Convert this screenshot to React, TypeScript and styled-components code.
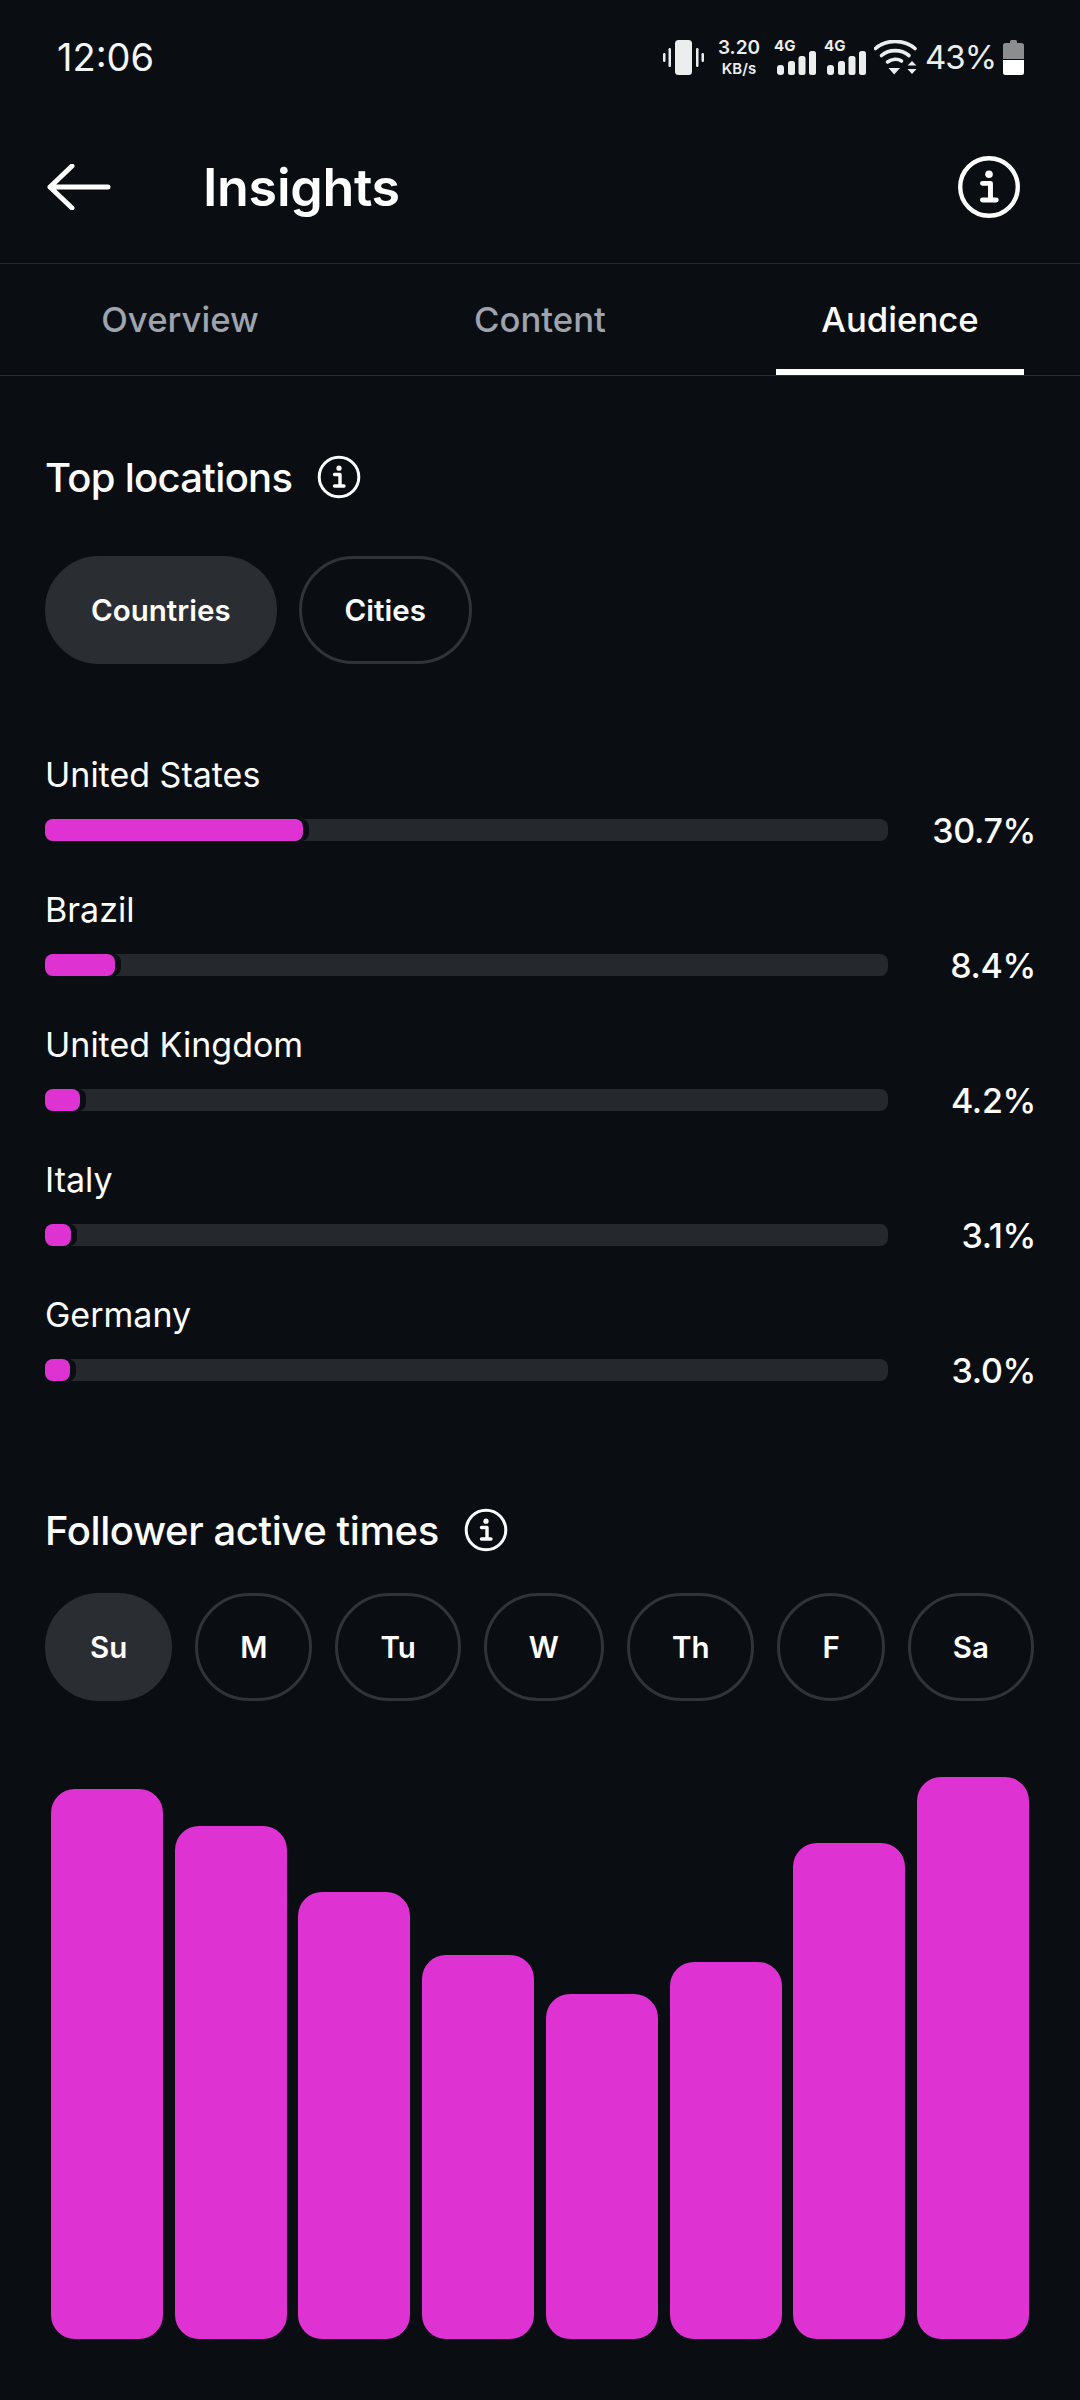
import styled, { createGlobalStyle } from "styled-components";

const GlobalStyle = createGlobalStyle`
  html, body {
    margin: 0;
    padding: 0;
    background: #0a0e12;
  }
  * {
    box-sizing: border-box;
  }
`;

const Page = styled.div`
  width: 1080px;
  height: 2400px;
  background: #0a0e12;
  color: #fff;
  font-family: Inter, "Noto Sans", sans-serif;
  overflow: hidden;
`;

const StatusBar = styled.div`
  height: 114px;
  padding: 0 56px 0 57px;
  display: flex;
  align-items: center;
  justify-content: space-between;
`;

const Time = styled.div`
  font-size: 38px;
  font-weight: 400;
  color: #f4f5f6;
`;

const StatusIcons = styled.div`
  display: flex;
  align-items: center;
`;

const Speed = styled.div`
  width: 42px;
  margin: 0 14px 0 14px;
  display: flex;
  flex-direction: column;
  align-items: center;
  gap: 3px;
  color: #eceded;
  font-weight: 600;
  white-space: nowrap;
`;

const SpeedValue = styled.span`
  font-size: 19px;
  line-height: 20px;
`;

const SpeedUnit = styled.span`
  font-size: 15px;
  line-height: 15px;
`;

const SignalGroup = styled.div`
  width: 42px;
  margin-right: 8px;
  height: 36px;
  position: relative;
`;

const SignalLabel = styled.span`
  position: absolute;
  left: 0;
  top: -2px;
  font-size: 15px;
  line-height: 18px;
  font-weight: 700;
  color: #eceded;
`;

const Battery = styled.div`
  width: 70px;
  font-size: 33px;
  color: #eceded;
  margin: 0 8px;
  letter-spacing: -1px;
  white-space: nowrap;
`;

const Header = styled.div`
  height: 150px;
  padding: 0 59px 3px 47px;
  display: flex;
  align-items: center;
  border-bottom: 1px solid #25282c;
`;

const Title = styled.h1`
  margin: 0 0 0 92px;
  flex: 1;
  font-size: 52px;
  font-weight: 600;
  letter-spacing: -0.3px;
`;

const Tabs = styled.div`
  height: 112px;
  display: grid;
  grid-template-columns: repeat(3, 1fr);
  border-bottom: 1px solid #2b2e32;
`;

const Tab = styled.div<{ $active?: boolean }>`
  position: relative;
  padding-bottom: 1px;
  display: flex;
  align-items: center;
  justify-content: center;
  font-size: 34.7px;
  font-weight: 500;
  color: ${(p) => (p.$active ? "#fff" : "#9ea3ad")};

  ${(p) =>
    p.$active &&
    `
    &::after {
      content: "";
      position: absolute;
      left: 56px;
      right: 56px;
      bottom: 0;
      height: 6px;
      background: #fff;
    }
  `}
`;

const SectionHeading = styled.div<{ $top: number }>`
  height: 60px;
  margin: ${(p) => p.$top}px 0 0 45px;
  display: flex;
  align-items: center;
  gap: 25px;
`;

const HeadingText = styled.h2<{ $tracking: number }>`
  margin: 0;
  font-size: 40px;
  font-weight: 500;
  letter-spacing: ${(p) => p.$tracking}px;
`;

const PillRow = styled.div`
  margin: 49px 0 0 45px;
  display: flex;
  gap: 22px;
`;

const Pill = styled.div<{ $active?: boolean; $pad: number }>`
  height: 108px;
  padding: 0 ${(p) => p.$pad}px;
  display: flex;
  align-items: center;
  justify-content: center;
  border-radius: 54px;
  font-size: 29.5px;
  font-weight: 600;
  border: 3px solid ${(p) => (p.$active ? "#2a2e33" : "#303337")};
  background: ${(p) => (p.$active ? "#2a2e33" : "transparent")};
`;

const LocationList = styled.div`
  margin: 88px 44px 0 45px;
  display: flex;
  flex-direction: column;
  gap: 46px;
`;

const LocationRow = styled.div`
  display: grid;
  grid-template-columns: 843px 1fr;
  row-gap: 23px;
  align-items: center;
`;

const LocationName = styled.div`
  grid-column: 1 / 3;
  height: 44px;
  line-height: 46px;
  font-size: 34px;
  font-weight: 400;
`;

const Track = styled.div`
  height: 22px;
  border-radius: 8px;
  background: #25282c;
`;

const Fill = styled.div`
  height: 22px;
  border-radius: 8px;
  background: #de33d2;
  box-shadow: 6px 0 0 #0a0e12;
`;

const Percent = styled.div`
  height: 22px;
  line-height: 24px;
  text-align: right;
  font-size: 34px;
  font-weight: 500;
  letter-spacing: -0.3px;
  white-space: nowrap;
`;

const DayRow = styled.div`
  margin: 33px 46px 0 45px;
  display: flex;
  justify-content: space-between;
`;

const Chart = styled.div`
  margin: 76px 51px 0 51px;
  height: 562px;
  display: flex;
  align-items: flex-end;
  justify-content: space-between;
`;

const Bar = styled.div`
  width: 112px;
  border-radius: 24px;
  background: #de33d2;
`;

const locations = [
  { name: "United States", value: "30.7%", fill: 258 },
  { name: "Brazil", value: "8.4%", fill: 70 },
  { name: "United Kingdom", value: "4.2%", fill: 35 },
  { name: "Italy", value: "3.1%", fill: 26 },
  { name: "Germany", value: "3.0%", fill: 25 },
];

const days = ["Su", "M", "Tu", "W", "Th", "F", "Sa"];

const barHeights = [550, 513, 447, 384, 345, 377, 496, 562];

function InfoIcon({ size }: { size: number }) {
  return (
    <svg width={size} height={size} viewBox="0 0 44 44" fill="none">
      <circle cx="22" cy="22" r="19.8" stroke="#fff" strokeWidth="3" />
      <circle cx="22" cy="13.2" r="2.6" fill="#fff" />
      <path
        d="M17.5 19.5H23V30.5M17.5 31H27"
        stroke="#fff"
        strokeWidth="3.4"
        strokeLinecap="round"
        strokeLinejoin="round"
      />
    </svg>
  );
}

function BackArrow() {
  return (
    <svg width="64" height="46" viewBox="0 0 64 46" fill="none">
      <path
        d="M61 23H3M25 2L3 23L25 44"
        stroke="#fff"
        strokeWidth="5"
        strokeLinecap="round"
        strokeLinejoin="round"
      />
    </svg>
  );
}

function VibrateIcon() {
  return (
    <svg width="41" height="35" viewBox="0 0 41 35" fill="#eceded">
      <rect x="12" y="0" width="17" height="35" rx="3.5" />
      <rect x="0" y="13" width="2.5" height="9" rx="1.2" />
      <rect x="5.5" y="8" width="2.5" height="19" rx="1.2" />
      <rect x="33" y="8" width="2.5" height="19" rx="1.2" />
      <rect x="38.5" y="13" width="2.5" height="9" rx="1.2" />
    </svg>
  );
}

function SignalIcon() {
  return (
    <svg
      width="39"
      height="24"
      viewBox="0 0 39 24"
      fill="#eceded"
      style={{ position: "absolute", left: 3, bottom: 0 }}
    >
      <rect x="0" y="14" width="7" height="10" rx="3" />
      <rect x="11" y="10" width="7" height="14" rx="2.5" />
      <rect x="21.5" y="5" width="7" height="19" rx="2.5" />
      <rect x="32" y="0" width="7" height="24" rx="2.5" />
    </svg>
  );
}

function WifiIcon() {
  return (
    <svg width="43" height="35" viewBox="0 0 43 35" fill="none">
      <path d="M1.5 8.5C12 -1 30 -1 41 8.5" stroke="#eceded" strokeWidth="3.6" strokeLinecap="round" />
      <path d="M7.5 15.5C15 9 27 9 35 15.5" stroke="#eceded" strokeWidth="3.6" strokeLinecap="round" />
      <path d="M13.5 22C18 18.5 24 18.5 27.5 21" stroke="#eceded" strokeWidth="3.6" strokeLinecap="round" />
      <path d="M14.5 28H26L20.2 34.5Z" fill="#eceded" />
      <path d="M33.5 25.5L38 21L42.5 25.5ZM33.5 29H42.5L38 34Z" fill="#eceded" />
    </svg>
  );
}

function BatteryIcon() {
  return (
    <svg width="21" height="35" viewBox="0 0 21 35" fill="none">
      <path d="M0 5.5a2.5 2.5 0 0 1 2.5-2.5H7V1.5A1.5 1.5 0 0 1 8.5 0h4A1.5 1.5 0 0 1 14 1.5V3h4.5A2.5 2.5 0 0 1 21 5.5V19H0Z" fill="#8c8d8e" />
      <path d="M0 20h21v12.5a2.5 2.5 0 0 1-2.5 2.5h-16A2.5 2.5 0 0 1 0 32.5Z" fill="#fff" />
    </svg>
  );
}

export default function App() {
  return (
    <Page>
      <GlobalStyle />
      <StatusBar>
        <Time>12:06</Time>
        <StatusIcons>
          <VibrateIcon />
          <Speed>
            <SpeedValue>3.20</SpeedValue>
            <SpeedUnit>KB/s</SpeedUnit>
          </Speed>
          <SignalGroup>
            <SignalLabel>4G</SignalLabel>
            <SignalIcon />
          </SignalGroup>
          <SignalGroup>
            <SignalLabel>4G</SignalLabel>
            <SignalIcon />
          </SignalGroup>
          <WifiIcon />
          <Battery>43%</Battery>
          <BatteryIcon />
        </StatusIcons>
      </StatusBar>

      <Header>
        <BackArrow />
        <Title>Insights</Title>
        <InfoIcon size={64} />
      </Header>

      <Tabs>
        <Tab>Overview</Tab>
        <Tab>Content</Tab>
        <Tab $active>Audience</Tab>
      </Tabs>

      <SectionHeading $top={71}>
        <HeadingText $tracking={-0.7}>Top locations</HeadingText>
        <InfoIcon size={44} />
      </SectionHeading>

      <PillRow>
        <Pill $active $pad={43}>
          Countries
        </Pill>
        <Pill $pad={43}>Cities</Pill>
      </PillRow>

      <LocationList>
        {locations.map((loc) => (
          <LocationRow key={loc.name}>
            <LocationName>{loc.name}</LocationName>
            <Track>
              <Fill style={{ width: loc.fill }} />
            </Track>
            <Percent>{loc.value}</Percent>
          </LocationRow>
        ))}
      </LocationList>

      <SectionHeading $top={119}>
        <HeadingText $tracking={-0.4}>Follower active times</HeadingText>
        <InfoIcon size={44} />
      </SectionHeading>

      <DayRow>
        {days.map((day, i) => (
          <Pill key={day} $active={i === 0} $pad={42}>
            {day}
          </Pill>
        ))}
      </DayRow>

      <Chart>
        {barHeights.map((h, i) => (
          <Bar key={i} style={{ height: h }} />
        ))}
      </Chart>
    </Page>
  );
}
